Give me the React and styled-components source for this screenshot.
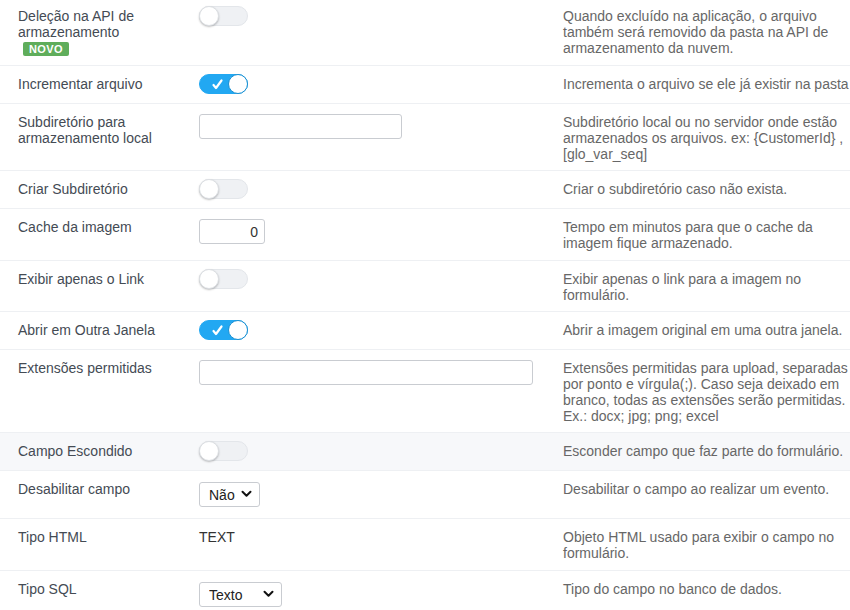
import React from "react";
import styled, { createGlobalStyle } from "styled-components";

const Global = createGlobalStyle`
  html, body { margin: 0; padding: 0; background: #fff; }
  body { font-family: "Liberation Sans", Arial, sans-serif; font-size: 14px; overflow: hidden; }
  * { box-sizing: border-box; }
`;

const Table = styled.div`
  margin-top: -2px;
  width: 850px;
`;

const Row = styled.div`
  display: grid;
  grid-template-columns: 181px 364px 1fr;
  padding: 10px 0 8px 18px;
  border-bottom: 1px solid #eef0f3;
  background: ${(p) => (p.$shaded ? "#f7f8fa" : "#fff")};
  align-items: start;
`;

const Label = styled.div`
  color: #444b54;
  line-height: 16px;
  padding-right: 20px;
`;

const Desc = styled.div`
  color: #676767;
  line-height: 16px;
`;

const BadgeLine = styled.div`
  line-height: 16px;
  height: 17px;
  padding-left: 5px;
  display: flex;
  align-items: center;
`;

const Badge = styled.span`
  display: inline-block;
  background: #5fad5b;
  color: #fff;
  font-weight: bold;
  font-size: 11px;
  line-height: 14px;
  height: 14px;
  padding: 0 6px;
  border-radius: 2px;
  letter-spacing: 0.4px;
`;

const Track = styled.div`
  position: relative;
  width: 49px;
  height: 20px;
  margin: -2px 0 1px;
  border-radius: 10px;
  background: ${(p) => (p.$on ? "#22a8f2" : "#eff1f4")};
  border: 1px solid ${(p) => (p.$on ? "#22a8f2" : "#e3e6ea")};
`;

const Knob = styled.div`
  position: absolute;
  top: -1px;
  ${(p) => (p.$on ? "right: -1px;" : "left: -1px;")}
  width: 20px;
  height: 20px;
  border-radius: 50%;
  background: #fff;
  border: 1px solid ${(p) => (p.$on ? "#1a8fd1" : "#dcdfe3")};
  box-shadow: ${(p) => (p.$on ? "none" : "0 1px 2px rgba(0,0,0,0.25)")};
`;

const Check = styled.svg`
  position: absolute;
  left: 11px;
  top: 3px;
`;

const Toggle = ({ on }) => (
  <Track $on={on}>
    {on && (
      <Check width="13" height="13" viewBox="0 0 13 13">
        <path d="M2.5 7 L5 10 L10.5 2.5" fill="none" stroke="#fff" strokeWidth="2.2" strokeLinecap="round" strokeLinejoin="round" />
      </Check>
    )}
    <Knob $on={on} />
  </Track>
);

const Input = styled.input`
  display: block;
  width: ${(p) => p.$w}px;
  height: 25px;
  margin-bottom: 8px;
  border: 1px solid #c9ccd1;
  border-radius: 3px;
  padding: 0 6px;
  font-family: "Liberation Sans", Arial, sans-serif;
  font-size: 14px;
  color: #333;
  text-align: ${(p) => (p.$right ? "right" : "left")};
  outline: none;
  background: #fff;
`;

const SelectWrap = styled.div`
  position: relative;
  width: ${(p) => p.$w}px;
  margin: 1px 0 3px;
`;

const SelectBox = styled.select`
  appearance: none;
  -webkit-appearance: none;
  width: 100%;
  height: 25px;
  border: 1px solid #c9ccd1;
  border-radius: 3px;
  padding: 0 0 0 9px;
  font-family: "Liberation Sans", Arial, sans-serif;
  font-size: 14px;
  color: #222;
  background: #fff;
  outline: none;
`;

const Chevron = styled.svg`
  position: absolute;
  right: 8px;
  top: 8px;
  pointer-events: none;
`;

const Select = ({ w, value, options }) => (
  <SelectWrap $w={w}>
    <SelectBox defaultValue={value}>
      {options.map((o) => (
        <option key={o}>{o}</option>
      ))}
    </SelectBox>
    <Chevron width="11" height="8" viewBox="0 0 11 8">
      <path d="M1.5 1.8 L5.5 5.8 L9.5 1.8" fill="none" stroke="#111" strokeWidth="2" strokeLinecap="round" strokeLinejoin="round" />
    </Chevron>
  </SelectWrap>
);

const Value = styled.div`
  color: #333;
  line-height: 16px;
  padding-bottom: 17px;
`;

const Cell = styled.div``;

const rows = [
  {
    label: "Deleção na API de armazenamento",
    badge: true,
    ctrl: <Toggle on={false} />,
    desc: "Quando excluído na aplicação, o arquivo também será removido da pasta na API de armazenamento da nuvem.",
  },
  { label: "Incrementar arquivo", ctrl: <Toggle on />, desc: "Incrementa o arquivo se ele já existir na pasta" },
  {
    label: "Subdiretório para armazenamento local",
    ctrl: <Input $w={203} />,
    desc: "Subdiretório local ou no servidor onde estão armazenados os arquivos. ex: {CustomerId} , [glo_var_seq]",
  },
  { label: "Criar Subdiretório", ctrl: <Toggle on={false} />, desc: "Criar o subdiretório caso não exista." },
  {
    label: "Cache da imagem",
    ctrl: <Input $w={66} $right defaultValue="0" />,
    desc: "Tempo em minutos para que o cache da imagem fique armazenado.",
  },
  { label: "Exibir apenas o Link", ctrl: <Toggle on={false} />, desc: "Exibir apenas o link para a imagem no formulário." },
  { label: "Abrir em Outra Janela", ctrl: <Toggle on />, desc: "Abrir a imagem original em uma outra janela." },
  {
    label: "Extensões permitidas",
    ctrl: <Input $w={334} />,
    desc: "Extensões permitidas para upload, separadas por ponto e vírgula(;). Caso seja deixado em branco, todas as extensões serão permitidas. Ex.: docx; jpg; png; excel",
  },
  { label: "Campo Escondido", shaded: true, ctrl: <Toggle on={false} />, desc: "Esconder campo que faz parte do formulário." },
  {
    label: "Desabilitar campo",
    ctrl: <Select w={61} value="Não" options={["Não", "Sim"]} />,
    desc: "Desabilitar o campo ao realizar um evento.",
  },
  { label: "Tipo HTML", ctrl: <Value>TEXT</Value>, desc: "Objeto HTML usado para exibir o campo no formulário." },
  {
    label: "Tipo SQL",
    ctrl: <Select w={83} value="Texto" options={["Texto", "Número", "Data"]} />,
    desc: "Tipo do campo no banco de dados.",
  },
];

export default function App() {
  return (
    <>
      <Global />
      <Table>
        {rows.map((r, i) => (
          <Row key={i} $shaded={r.shaded}>
            <Label>
              {r.label}
              {r.badge && (
                <BadgeLine>
                  <Badge>NOVO</Badge>
                </BadgeLine>
              )}
            </Label>
            <Cell>{r.ctrl}</Cell>
            <Desc>{r.desc}</Desc>
          </Row>
        ))}
      </Table>
    </>
  );
}
